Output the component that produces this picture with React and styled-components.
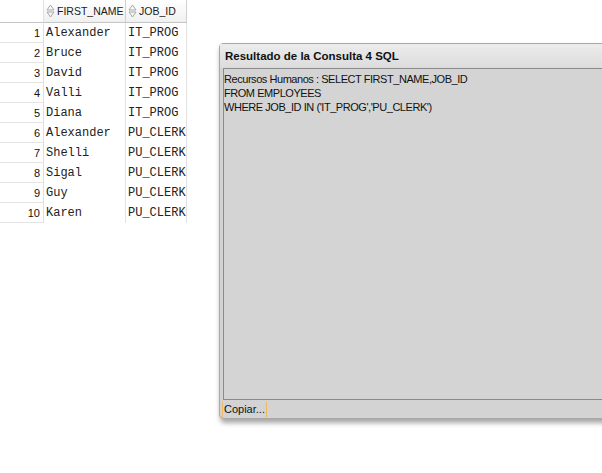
import React from 'react';
import styled, { createGlobalStyle } from 'styled-components';

const GlobalStyle = createGlobalStyle`
  html, body {
    margin: 0;
    padding: 0;
    background: #ffffff;
    overflow: hidden;
  }
  body {
    font-family: "Liberation Sans", Arial, sans-serif;
  }
`;

const Page = styled.div`
  display: flex;
  align-items: flex-start;
  width: 602px;
  height: 473px;
  overflow: hidden;
`;

const Grid = styled.div`
  display: grid;
  grid-template-columns: 44px 82px 61px;
  flex-shrink: 0;
`;

const HeadCell = styled.div`
  height: 22px;
  display: flex;
  align-items: center;
  gap: 2px;
  padding-left: ${(p) => (p.$blank ? '0' : '2px')};
  border-bottom: 1px solid #c4c4c4;
  border-right: 1px solid ${(p) => (p.$blank ? '#e2e2e2' : '#d0d0d0')};
  background: ${(p) => (p.$blank ? '#ffffff' : 'linear-gradient(#ffffff, #f0f0f0)')};
  font-size: 10.5px;
  color: #1a1a1a;
`;

const NumCell = styled.div`
  height: 19px;
  display: flex;
  align-items: center;
  justify-content: flex-end;
  padding-right: 3px;
  border-bottom: 1px solid #e4e4e4;
  border-right: 1px solid #dedede;
  font-size: 11px;
  color: #111;
`;

const DataCell = styled.div`
  height: 20px;
  display: flex;
  align-items: center;
  padding-left: 2px;
  border-right: 1px solid #e2e2e2;
  font-family: "Liberation Mono", "Courier New", monospace;
  font-size: 12px;
  color: #222;
`;

const Window = styled.div`
  margin-top: 43px;
  margin-left: 32px;
  width: 420px;
  flex-shrink: 0;
  background: #d3d3d3;
  border: 1px solid #a8a8a8;
  border-radius: 4px 0 0 5px;
  box-shadow: 1px 4px 5px rgba(0, 0, 0, 0.35);
  display: flex;
  flex-direction: column;
`;

const TitleBar = styled.div`
  height: 24px;
  display: flex;
  align-items: center;
  padding-left: 5px;
  background: linear-gradient(#ececec, #dcdcdc);
  font-weight: bold;
  font-size: 11.5px;
  color: #111;
`;

const Body = styled.div`
  margin-left: 3px;
  height: 327px;
  border-top: 1px solid #8a8a8a;
  border-left: 1px solid #8a8a8a;
  border-bottom: 1px solid #8a8a8a;
  background: #d4d4d4;
  padding: 3px 0 0 0;
  font-size: 11px;
  letter-spacing: -0.45px;
  line-height: 14px;
  color: #111;
`;

const Footer = styled.div`
  height: 18px;
  display: flex;
  align-items: center;
  padding-left: 2px;
`;

const CopyButton = styled.div`
  height: 15px;
  display: flex;
  align-items: center;
  padding: 0 1px;
  border-left: 1px solid #f0b860;
  border-right: 1px solid #f0b860;
  font-size: 11px;
  color: #111;
`;

const SortIcon = () => (
  <svg width="9" height="14" viewBox="0 0 9 14">
    <path d="M4.5 1 L8 6 L1 6 Z" fill="none" stroke="#a8a8a8" strokeWidth="1" />
    <path d="M4.5 13 L8 8 L1 8 Z" fill="none" stroke="#a8a8a8" strokeWidth="1" />
  </svg>
);

const rows = [
  ['Alexander', 'IT_PROG'],
  ['Bruce', 'IT_PROG'],
  ['David', 'IT_PROG'],
  ['Valli', 'IT_PROG'],
  ['Diana', 'IT_PROG'],
  ['Alexander', 'PU_CLERK'],
  ['Shelli', 'PU_CLERK'],
  ['Sigal', 'PU_CLERK'],
  ['Guy', 'PU_CLERK'],
  ['Karen', 'PU_CLERK'],
];

const App = () => {
  return (
    <Page>
      <GlobalStyle />
      <Grid>
        <HeadCell $blank />
        <HeadCell><SortIcon />FIRST_NAME</HeadCell>
        <HeadCell><SortIcon />JOB_ID</HeadCell>
        {rows.map(([name, job], i) => (
          <React.Fragment key={i}>
            <NumCell>{i + 1}</NumCell>
            <DataCell>{name}</DataCell>
            <DataCell>{job}</DataCell>
          </React.Fragment>
        ))}
      </Grid>
      <Window>
        <TitleBar>Resultado de la Consulta 4 SQL</TitleBar>
        <Body>
          Recursos Humanos : SELECT FIRST_NAME,JOB_ID<br />
          FROM EMPLOYEES<br />
          WHERE JOB_ID IN ('IT_PROG','PU_CLERK')
        </Body>
        <Footer>
          <CopyButton>Copiar...</CopyButton>
        </Footer>
      </Window>
    </Page>
  );
};

export default App;
